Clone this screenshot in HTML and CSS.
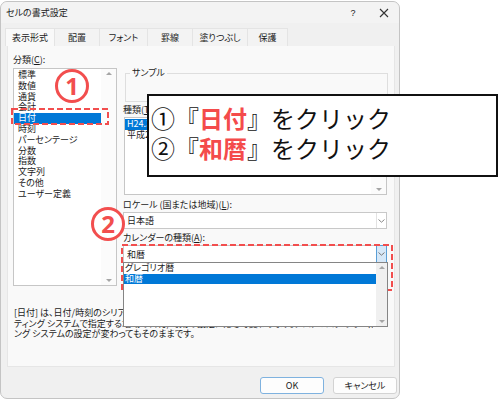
FILE: index.html
```html
<!DOCTYPE html>
<html lang="ja">
<head>
<meta charset="utf-8">
<link rel="stylesheet" href="styles.css">
</head>
<body>
<div class="stage">
  <div class="dialog">
    <div class="titlebar">
      <span class="title">セルの書式設定</span>
      <span class="help">?</span>
      <span class="close"><svg width="10" height="10" viewBox="0 0 10 10"><path d="M1 1L9 9M9 1L1 9" stroke="#333" stroke-width="1.1" fill="none"/></svg></span>
    </div>
    <div class="tabs">
      <div class="tab active w50">表示形式</div>
      <div class="tab w45">配置</div>
      <div class="tab w48">フォント</div>
      <div class="tab w45">罫線</div>
      <div class="tab w55">塗りつぶし</div>
      <div class="tab w40">保護</div>
    </div>
    <div class="panel">
      <div class="cols">
        <div class="leftcol">
          <div class="label">分類(<u>C</u>):</div>
          <div class="listbox cat">
            <ul class="items">
              <li>標準</li>
              <li>数値</li>
              <li>通貨</li>
              <li>会計</li>
              <li class="sel">日付</li>
              <li>時刻</li>
              <li>パーセンテージ</li>
              <li>分数</li>
              <li>指数</li>
              <li>文字列</li>
              <li>その他</li>
              <li>ユーザー定義</li>
            </ul>
            <div class="vscroll"><span class="arr up"></span><span class="arr down"></span></div>
          </div>
        </div>
        <div class="rightcol">
          <div class="sample"><span class="legend">サンプル</span></div>
          <div class="label mt3">種類(<u>T</u>):</div>
          <div class="listbox types">
            <ul class="items">
              <li class="sel">H24.3.14</li>
              <li>平成24年3月14日</li>
            </ul>
            <div class="vscroll"><span class="arr up"></span><span class="arr down"></span></div>
          </div>
          <div class="label mt5">ロケール (国または地域)(<u>L</u>):</div>
          <div class="combo">
            <span class="val">日本語</span>
            <span class="cbtn"><svg width="7" height="4" viewBox="0 0 7 4"><path d="M0.5 0.5L3.5 3.2L6.5 0.5" stroke="#888" fill="none"/></svg></span>
          </div>
          <div class="label mt4">カレンダーの種類(<u>A</u>):</div>
          <div class="combo cal">
            <span class="val">和暦</span>
            <span class="cbtn hot"><svg width="7" height="4" viewBox="0 0 7 4"><path d="M0.5 0.5L3.5 3.2L6.5 0.5" stroke="#777" fill="none"/></svg></span>
            <div class="droplist">
              <ul class="items">
                <li>グレゴリオ暦</li>
                <li class="sel">和暦</li>
              </ul>
              <div class="vscroll gray"><span class="arr up"></span><span class="arr down"></span></div>
            </div>
          </div>
        </div>
      </div>
      <div class="desc">
        <div>[日付] は、日付/時刻のシリアル値を日付形式で表示します。アスタリスク (*) で始まる日付形式は、オペレー</div>
        <div>ティング システムで指定する地域の日付/時刻の設定に応じて変わります。アスタリスクのない形式は、オペレーティ</div>
        <div>ング システムの設定が変わってもそのままです。</div>
      </div>
    </div>
    <div class="buttons">
      <button class="btn ok">OK</button>
      <button class="btn">キャンセル</button>
    </div>
  </div>

  <svg class="dash dash1" width="98" height="17" viewBox="0 0 98 17"><rect x="1" y="1" width="96" height="15" fill="none" stroke="#f24e4e" stroke-width="2" stroke-dasharray="6 3"/></svg>
  <svg class="dash dash2" width="272" height="47" viewBox="0 0 272 47"><rect x="1" y="1" width="270" height="45" fill="none" stroke="#f24e4e" stroke-width="2" stroke-dasharray="6 3"/></svg>
  <div class="badge b1">1</div>
  <div class="badge b2">2</div>
  <div class="callout">
    <div class="cline">①『<b>日付</b>』をクリック</div>
    <div class="cline">②『<b>和暦</b>』をクリック</div>
  </div>
</div>
</body>
</html>
```

FILE: styles.css
```css
* { box-sizing: border-box; }
body {
  margin: 0;
  background: #fff;
  font-family: "Noto Sans CJK JP", "Noto Sans", sans-serif;
  font-size: 9px;
  color: #1b1b1b;
  font-feature-settings: "palt";
}
.stage {
  position: relative;
  width: 501px;
  height: 400px;
  overflow: hidden;
  padding-top: 1px;
}
.dialog {
  width: 400px;
  height: 398px;
  border: 1px solid #c4c4c4;
  border-radius: 7px;
  background: #f0f0f0;
  display: flex;
  flex-direction: column;
}
.titlebar {
  height: 21px;
  display: flex;
  align-items: center;
  padding-left: 5px;
  padding-right: 5px;
  background: #f3f3f3;
  border-radius: 7px 7px 0 0;
}
.title { font-size: 9px; }
.help {
  margin-left: auto;
  width: 20px;
  text-align: center;
  font-size: 9px;
  font-family: "Liberation Sans", sans-serif;
}
.close {
  width: 20px;
  margin-left: 11px;
  display: flex;
  justify-content: center;
}
.tabs {
  display: flex;
  margin-top: 5px;
  height: 18px;
  padding-left: 4px;
}
.tab {
  height: 18px;
  display: flex;
  align-items: center;
  justify-content: center;
  background: #f3f3f3;
  border-top: 1px solid #e4e4e4;
  border-right: 1px solid #e4e4e4;
  font-size: 9px;
}
.tab.active {
  background: #f9f9f9;
  border-left: 1px solid #e4e4e4;
}
.w50 { width: 50px; }
.w45 { width: 45px; }
.w48 { width: 48px; }
.w55 { width: 55px; }
.w40 { width: 40px; }
.panel {
  margin-left: 6px;
  width: 388px;
  height: 321px;
  background: #f9f9f9;
  border: 1px solid #e6e6e6;
  border-top: none;
  padding: 9px 0 0 5px;
}
.cols {
  display: grid;
  grid-template-columns: 104px 264px;
  column-gap: 6px;
  align-items: start;
}
.label {
  height: 10px;
  line-height: 10px;
  white-space: nowrap;
}
.leftcol .label { margin-bottom: 3px; }
.mt3 { margin-top: 3px; margin-bottom: 2px; }
.mt5 { margin-top: 5px; margin-bottom: 2px; }
.mt4 { margin-top: 4px; margin-bottom: 2px; }
.listbox {
  position: relative;
  background: #fff;
  border: 1px solid #c6c6c6;
  display: flex;
}
.listbox.cat { height: 218px; }
.listbox.types { height: 78px; margin-left: 1px; }
.items {
  list-style: none;
  margin: 0;
  padding: 1px 0 0 0;
  flex: 1;
}
.items li {
  height: 10.8px;
  line-height: 10.8px;
  padding-left: 4px;
  white-space: nowrap;
}
.types .items li { height: 10.5px; line-height: 10.5px; padding-left: 2px; }
.items li.sel {
  background: #0078d7;
  color: #fff;
}
.vscroll {
  width: 15px;
  position: relative;
  background: #fbfbfb;
}
.vscroll.gray { width: 11px; background: #f0f0f0; }
.arr {
  position: absolute;
  left: 50%;
  margin-left: -3px;
  width: 0;
  height: 0;
  border-left: 3px solid transparent;
  border-right: 3px solid transparent;
}
.arr.up { top: 3px; border-bottom: 3px solid #a5a5a5; }
.arr.down { bottom: 3px; border-top: 3px solid #a5a5a5; }
.sample {
  margin: 18px 0 0 2px;
  width: 263px;
  height: 29px;
  border: 1px solid #dedede;
  position: relative;
}
.legend {
  display: inline-block;
  margin: -6px 0 0 4px;
  padding: 0 2px;
  background: #f9f9f9;
  line-height: 10px;
  vertical-align: top;
}
.combo {
  position: relative;
  height: 17px;
  background: #fff;
  border: 1px solid #c8c8c8;
  display: flex;
  align-items: center;
}
.combo.cal { height: 18px; }
.combo .val { flex: 1; padding-left: 3px; }
.cbtn {
  width: 10px;
  align-self: stretch;
  display: flex;
  align-items: center;
  justify-content: center;
  border-left: 1px solid #e2e2e2;
}
.cbtn.hot {
  width: 11px;
  background: #d6e8f8;
  border: 1px solid #5a9fd6;
  margin: -1px -1px -1px 0;
}
.droplist {
  position: absolute;
  top: 100%;
  left: -1px;
  width: 265px;
  height: 65px;
  background: #fff;
  border: 1px solid #858585;
  display: flex;
  z-index: 2;
}
.droplist .items { padding-top: 0; }
.droplist .items li { height: 10.7px; line-height: 10.7px; padding-left: 1px; }
.desc {
  margin-top: 22px;
  padding-left: 1px;
  width: 360px;
  overflow: hidden;
  line-height: 10.5px;
  white-space: nowrap;
}
.buttons {
  display: flex;
  justify-content: flex-end;
  gap: 9px;
  margin-top: 10px;
  padding-right: 2px;
}
.btn {
  width: 64px;
  height: 17px;
  border: 1px solid #d3d3d3;
  border-radius: 3px;
  background: #fdfdfd;
  font-family: inherit;
  font-size: 9px;
  color: #1b1b1b;
  padding: 0;
  font-feature-settings: "palt";
}
.btn.ok { border-color: #7fb2df; }

/* annotations */
.dash { position: absolute; }
.dash1 { left: 11px; top: 108px; }
.dash2 { left: 121px; top: 244px; }
.badge {
  position: absolute;
  width: 34px;
  height: 34px;
  border: 3px solid #f24e4e;
  border-radius: 50%;
  background: #fff;
  color: #f24e4e;
  font-family: "Noto Sans", sans-serif;
  font-weight: 700;
  font-size: 24px;
  line-height: 28px;
  text-align: center;
}
.b1 { left: 55px; top: 69px; }
.b2 { left: 91px; top: 207px; }
.callout {
  position: absolute;
  left: 147px;
  top: 94px;
  width: 351px;
  height: 83px;
  border: 2px solid #111;
  background: #fff;
  padding: 7px 0 0 2px;
  font-size: 24px;
  color: #111;
  font-feature-settings: normal;
}
.cline { height: 30px; line-height: 30px; white-space: nowrap; }
.cline b { color: #f44b4b; font-weight: 700; }
```
